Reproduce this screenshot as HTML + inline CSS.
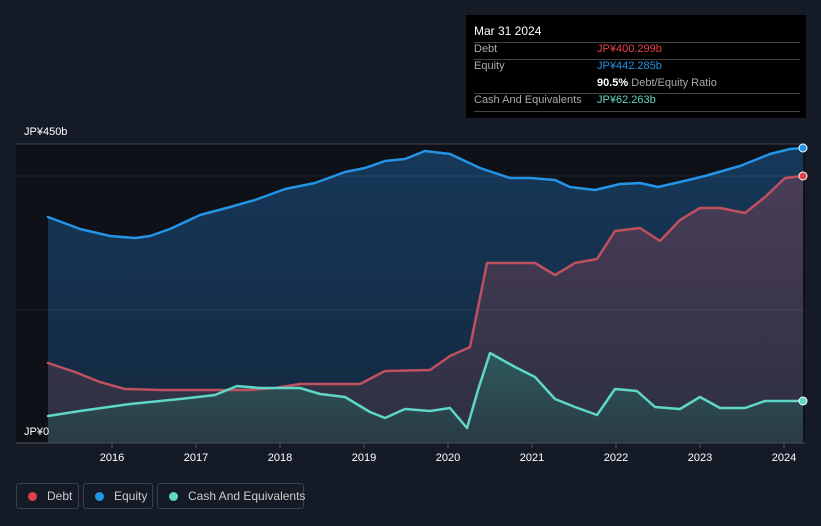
<!DOCTYPE html>
<html><head><style>
body{margin:0;width:821px;height:526px;background:#151b26;font-family:"Liberation Sans",sans-serif;overflow:hidden;position:relative}
.tt{position:absolute;left:466px;top:15px;width:340px;height:103px;background:#000;color:#fff;font-size:11px}
.r{position:absolute;left:8px;width:326px;border-bottom:1px solid #444}
.lg{position:absolute;top:483px;height:26px;border:1px solid #3a414c;border-radius:3px;color:#ccc;font-size:12px;line-height:24px;box-sizing:border-box;white-space:nowrap}
.lg i{display:inline-block;width:9px;height:9px;border-radius:50%;margin:0 10px 0 11px;vertical-align:-1px}
</style></head><body>
<svg width="821" height="526" style="position:absolute;left:0;top:0">
<defs>
<linearGradient id="ge" x1="0" y1="0" x2="0" y2="1"><stop offset="0" stop-color="#16385a"/><stop offset="1" stop-color="#13283d"/></linearGradient>
<linearGradient id="gd" x1="0" y1="0" x2="0" y2="1"><stop offset="0" stop-color="#4a3d58"/><stop offset="1" stop-color="#2c2f40"/></linearGradient>
<linearGradient id="gc" x1="0" y1="0" x2="0" y2="1"><stop offset="0" stop-color="#2e5a5c"/><stop offset="1" stop-color="#2a3a44"/></linearGradient>
</defs>
<rect x="16" y="144" width="789" height="299" fill="#0e1117"/>
<path d="M48,217 L80,229 110,236 135,238 150,236 170,229 200,215 230,207 255,200 285,189 315,183 345,172 365,168 385,161 405,159 425,151 450,154 480,168 510,178 530,178 555,180 570,187 595,190 620,184 640,183 658,187 680,182 705,176 740,166 770,154 790,149 803,148 L803,443 L48,443Z" fill="url(#ge)"/>
<path d="M48,363 L75,372 100,382 125,389 160,390 200,390 250,390 275,388 300,384 360,384 385,371 430,370 450,356 470,347 487,263 535,263 555,275 575,263 597,259 615,231 640,228 660,241 680,220 700,208 720,208 745,213 765,197 785,178 803,176 L803,443 L48,443Z" fill="url(#gd)"/>
<path d="M48,416 L80,411 130,404 180,399 215,395 237,386 260,388 300,388 320,394 345,397 370,412 385,418 405,409 430,411 450,408 467,428 478,390 490,353 515,367 535,377 555,399 575,407 597,415 615,389 637,391 655,407 680,409 700,397 720,408 745,408 765,401 803,401 L803,443 L48,443Z" fill="url(#gc)"/>
<line x1="16" y1="144" x2="805" y2="144" stroke="#444" stroke-width="1"/>
<line x1="16" y1="176" x2="805" y2="176" stroke="#ffffff" stroke-opacity="0.07" stroke-width="1"/>
<line x1="16" y1="310" x2="805" y2="310" stroke="#ffffff" stroke-opacity="0.07" stroke-width="1"/>
<g fill="none" stroke-width="2.5" stroke-linejoin="round" stroke-linecap="round">
<path d="M48,217 L80,229 110,236 135,238 150,236 170,229 200,215 230,207 255,200 285,189 315,183 345,172 365,168 385,161 405,159 425,151 450,154 480,168 510,178 530,178 555,180 570,187 595,190 620,184 640,183 658,187 680,182 705,176 740,166 770,154 790,149 803,148" stroke="#2394e6"/>
<path d="M48,363 L75,372 100,382 125,389 160,390 200,390 250,390 275,388 300,384 360,384 385,371 430,370 450,356 470,347 487,263 535,263 555,275 575,263 597,259 615,231 640,228 660,241 680,220 700,208 720,208 745,213 765,197 785,178 803,176" stroke="#c0505f"/>
<path d="M48,416 L80,411 130,404 180,399 215,395 237,386 260,388 300,388 320,394 345,397 370,412 385,418 405,409 430,411 450,408 467,428 478,390 490,353 515,367 535,377 555,399 575,407 597,415 615,389 637,391 655,407 680,409 700,397 720,408 745,408 765,401 803,401" stroke="#5fd6c6"/>
</g>
<line x1="16" y1="443" x2="805" y2="443" stroke="#4a525c"/>
<g stroke="#4a525c"><line x1="112" y1="443" x2="112" y2="448"/><line x1="196" y1="443" x2="196" y2="448"/><line x1="280" y1="443" x2="280" y2="448"/><line x1="364" y1="443" x2="364" y2="448"/><line x1="448" y1="443" x2="448" y2="448"/><line x1="532" y1="443" x2="532" y2="448"/><line x1="616" y1="443" x2="616" y2="448"/><line x1="700" y1="443" x2="700" y2="448"/><line x1="784" y1="443" x2="784" y2="448"/></g>
<circle cx="803" cy="148" r="4" fill="#2394e6" stroke="#fff" stroke-width="1"/>
<circle cx="803" cy="176" r="4" fill="#e0404a" stroke="#fff" stroke-width="1"/>
<circle cx="803" cy="401" r="4" fill="#5fd6c6" stroke="#fff" stroke-width="1"/>
<g fill="#fff" font-size="11" font-family="Liberation Sans" text-anchor="middle"><text x="112" y="461">2016</text><text x="196" y="461">2017</text><text x="280" y="461">2018</text><text x="364" y="461">2019</text><text x="448" y="461">2020</text><text x="532" y="461">2021</text><text x="616" y="461">2022</text><text x="700" y="461">2023</text><text x="784" y="461">2024</text></g>
<text x="24" y="135" fill="#fff" font-size="11" font-family="Liberation Sans">JP¥450b</text>
<text x="24" y="435" fill="#fff" font-size="11" font-family="Liberation Sans">JP¥0</text>
</svg>
<div class="tt">
<div style="position:absolute;left:8px;top:9px;font-size:12px">Mar 31 2024</div>
<div class="r" style="top:27px"></div>
<div style="position:absolute;left:8px;top:28px;color:#aaa">Debt</div><div style="position:absolute;left:131px;top:28px;color:#e8404a">JP¥400.299b</div>
<div class="r" style="top:44px"></div>
<div style="position:absolute;left:8px;top:45px;color:#aaa">Equity</div><div style="position:absolute;left:131px;top:45px;color:#2394e6">JP¥442.285b</div>
<div style="position:absolute;left:131px;top:62px;color:#aaa"><b style="color:#fff">90.5%</b> Debt/Equity Ratio</div>
<div class="r" style="top:78px"></div>
<div style="position:absolute;left:8px;top:79px;color:#aaa">Cash And Equivalents</div><div style="position:absolute;left:131px;top:79px;color:#5fd6c6">JP¥62.263b</div>
<div class="r" style="top:96px"></div>
</div>
<div class="lg" style="left:16px;width:63px"><i style="background:#e0404a"></i>Debt</div>
<div class="lg" style="left:83px;width:70px"><i style="background:#2394e6"></i>Equity</div>
<div class="lg" style="left:157px;width:147px"><i style="background:#5fd6c6"></i>Cash And Equivalents</div>
</body></html>
